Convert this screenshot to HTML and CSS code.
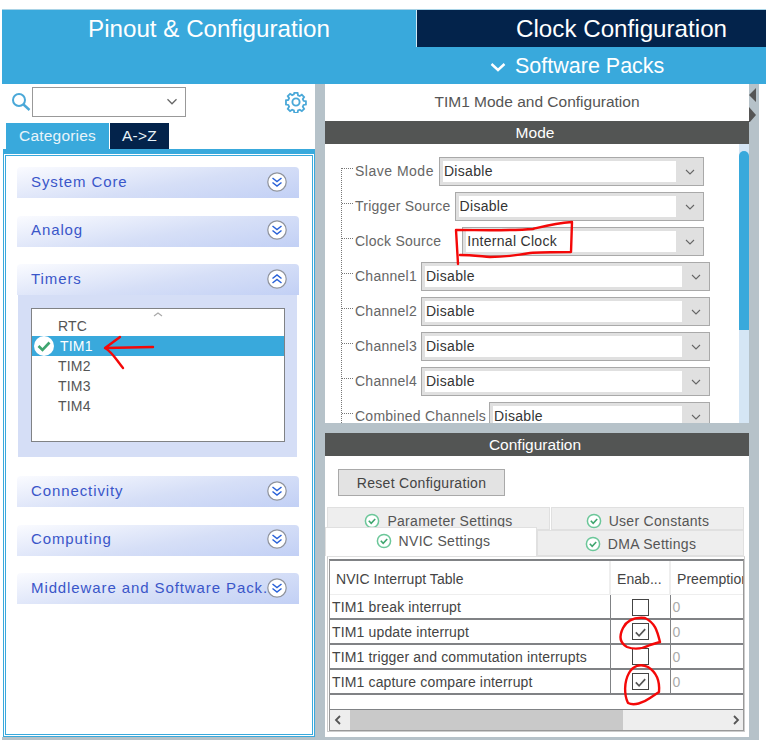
FILE: index.html
```html
<!DOCTYPE html>
<html lang="en">
<head>
  <meta charset="UTF-8">
  <title>TIM1 Mode and Configuration</title>
  <link rel="stylesheet" href="styles.css">
</head>
<body>
  <svg class="defs" width="0" height="0">
    <symbol id="chev" viewBox="0 0 12 8"><path d="M2 2l4 4 4-4" fill="none" stroke="#666" stroke-width="1.1"/></symbol>
    <symbol id="down2" viewBox="0 0 20 20"><circle cx="10" cy="10" r="9.2" fill="#fff" stroke="#8f939c" stroke-width="1.2"/><path d="M5.500 6l4.500 3.500L14.500 6M5.500 10.500l4.500 3.500 4.500-3.500" fill="none" stroke="#2a62d8" stroke-width="1.500"/></symbol>
    <symbol id="up2" viewBox="0 0 20 20"><circle cx="10" cy="10" r="9.2" fill="#fff" stroke="#8f939c" stroke-width="1.2"/><path d="M5.500 9.500L10 6l4.500 3.500M5.500 14L10 10.500l4.500 3.500" fill="none" stroke="#2a62d8" stroke-width="1.500"/></symbol>
    <symbol id="ok" viewBox="0 0 16 16"><circle cx="8" cy="8" r="6.600" fill="#fff" stroke="#6cc79a" stroke-width="1.500"/><path d="M4.800 7.800l2.400 2.600 4-4.400" fill="none" stroke="#3fa56f" stroke-width="1.600"/></symbol>
    <symbol id="tick" viewBox="0 0 16 16"><path d="M3 8.500l3.500 3.500L13 5" fill="none" stroke="#555" stroke-width="1.800"/></symbol>
  </svg>

  <div class="app">
    <div class="top-tabs">
      <div class="top-tab active">Pinout &amp; Configuration</div>
      <div class="top-tab dark">Clock Configuration</div>
    </div>
    <div class="packs-bar">
      <div class="packs-left"></div>
      <div class="packs-label">
        <svg width="16" height="10" viewBox="0 0 16 10"><path d="M1.500 2l6.500 6 6.500-6" fill="none" stroke="#fff" stroke-width="2.400"/></svg>
        Software Packs
      </div>
    </div>

    <div class="main">
      <div class="left">
        <div class="search-row">
          <svg class="search-icon" width="20" height="20" viewBox="0 0 20 20"><circle cx="8" cy="8" r="6" fill="none" stroke="#4aa8d8" stroke-width="2"/><path d="M12.500 12.500L18.500 18" stroke="#4aa8d8" stroke-width="2.400"/></svg>
          <div class="search-box"><svg width="14" height="9"><use href="#chev"/></svg></div>
          <svg class="gear" width="22" height="22" viewBox="0 0 22 22"><path d="M9.300 1.500h3.400l.5 2.500 1.800.8 2.200-1.400 2.400 2.400-1.400 2.200.8 1.800 2.500.5v3.400l-2.500.5-.8 1.800 1.400 2.200-2.400 2.400-2.200-1.400-1.800.8-.5 2.500H9.300l-.5-2.500-1.800-.8-2.200 1.400-2.400-2.400 1.400-2.200-.8-1.800-2.500-.5V9.300l2.500-.5.800-1.800-1.400-2.200 2.400-2.400 2.200 1.400 1.800-.8z" transform="translate(0.500 0.500) scale(0.950)" fill="none" stroke="#4aa8d8" stroke-width="1.900"/><circle cx="11" cy="11" r="3.600" fill="none" stroke="#4aa8d8" stroke-width="1.900"/></svg>
        </div>
        <div class="cat-tabs">
          <div class="cat-tab on">Categories</div>
          <div class="cat-tab off">A-&gt;Z</div>
        </div>
        <div class="cat-panel">
          <div class="acc-head"><span class="acc-title">System Core</span><svg class="acc-icon" width="20" height="20"><use href="#down2"/></svg></div>
          <div class="acc-head"><span class="acc-title">Analog</span><svg class="acc-icon" width="20" height="20"><use href="#down2"/></svg></div>
          <div class="acc-head open"><span class="acc-title">Timers</span><svg class="acc-icon" width="20" height="20"><use href="#up2"/></svg></div>
          <div class="acc-body">
            <div class="list-box">
              <div class="list-up"><svg width="12" height="6" viewBox="0 0 12 6"><path d="M2 5l4-3 4 3" fill="none" stroke="#aaa" stroke-width="1.200"/></svg></div>
              <div class="list-item">RTC</div>
              <div class="list-item selected"><svg class="list-ok" width="20" height="20" viewBox="0 0 20 20"><circle cx="10" cy="10" r="10" fill="#fff"/><path d="M4.500 10l4 4 7-7.500" fill="none" stroke="#3fa56f" stroke-width="2.600"/></svg>TIM1</div>
              <div class="list-item">TIM2</div>
              <div class="list-item">TIM3</div>
              <div class="list-item">TIM4</div>
            </div>
          </div>
          <div class="acc-head"><span class="acc-title">Connectivity</span><svg class="acc-icon" width="20" height="20"><use href="#down2"/></svg></div>
          <div class="acc-head"><span class="acc-title">Computing</span><svg class="acc-icon" width="20" height="20"><use href="#down2"/></svg></div>
          <div class="acc-head"><span class="acc-title">Middleware and Software Pack..</span><svg class="acc-icon" width="20" height="20"><use href="#down2"/></svg></div>
        </div>
      </div>

      <div class="splitter"></div>

      <div class="right">
        <div class="right-title">TIM1 Mode and Configuration</div>
        <div class="bar">Mode</div>
        <div class="mode-area">
          <div class="mode-rows">
            <div class="mode-row narrow"><span class="mode-label slave-label">Slave Mode</span><div class="combo"><div class="combo-val">Disable</div><svg width="12" height="8"><use href="#chev"/></svg></div></div>
            <div class="mode-row narrow"><span class="mode-label">Trigger Source</span><div class="combo"><div class="combo-val">Disable</div><svg width="12" height="8"><use href="#chev"/></svg></div></div>
            <div class="mode-row narrow"><span class="mode-label clock-label">Clock Source</span><div class="combo"><div class="combo-val">Internal Clock</div><svg width="12" height="8"><use href="#chev"/></svg></div></div>
            <div class="mode-row"><span class="mode-label">Channel1</span><div class="combo"><div class="combo-val">Disable</div><svg width="12" height="8"><use href="#chev"/></svg></div></div>
            <div class="mode-row"><span class="mode-label">Channel2</span><div class="combo"><div class="combo-val">Disable</div><svg width="12" height="8"><use href="#chev"/></svg></div></div>
            <div class="mode-row"><span class="mode-label">Channel3</span><div class="combo"><div class="combo-val">Disable</div><svg width="12" height="8"><use href="#chev"/></svg></div></div>
            <div class="mode-row"><span class="mode-label">Channel4</span><div class="combo"><div class="combo-val">Disable</div><svg width="12" height="8"><use href="#chev"/></svg></div></div>
            <div class="mode-row"><span class="mode-label combined-label">Combined Channels</span><div class="combo"><div class="combo-val">Disable</div><svg width="12" height="8"><use href="#chev"/></svg></div></div>
          </div>
          <div class="mode-scroll"><div class="mode-thumb"></div></div>
        </div>
        <div class="h-split"></div>
        <div class="bar">Configuration</div>
        <div class="config">
          <div class="reset-btn">Reset Configuration</div>
          <div class="cfg-tabs">
            <div class="tab-row back">
              <div class="cfg-tab param"><svg width="16" height="16"><use href="#ok"/></svg>Parameter Settings</div>
              <div class="cfg-tab user"><svg width="16" height="16"><use href="#ok"/></svg>User Constants</div>
            </div>
            <div class="tab-row front">
              <div class="cfg-tab nvic"><svg width="16" height="16"><use href="#ok"/></svg>NVIC Settings</div>
              <div class="cfg-tab dma"><svg width="16" height="16"><use href="#ok"/></svg>DMA Settings</div>
            </div>
          </div>
          <div class="tab-body">
            <div class="table-wrap">
              <table class="nvic-table">
                <colgroup><col class="c1"><col class="c2"><col class="c3"></colgroup>
                <tr class="head"><th>NVIC Interrupt Table</th><th>Enab...</th><th>Preemption Priority</th></tr>
                <tr class="first"><td>TIM1 break interrupt</td><td class="chk"><span class="box"></span></td><td class="num">0</td></tr>
                <tr><td>TIM1 update interrupt</td><td class="chk"><span class="box"><svg width="16" height="16"><use href="#tick"/></svg></span></td><td class="num">0</td></tr>
                <tr><td>TIM1 trigger and commutation interrupts</td><td class="chk"><span class="box"></span></td><td class="num">0</td></tr>
                <tr><td>TIM1 capture compare interrupt</td><td class="chk"><span class="box"><svg width="16" height="16"><use href="#tick"/></svg></span></td><td class="num">0</td></tr>
                <tr class="blank"><td colspan="3"></td></tr>
              </table>
              <div class="h-scroll">
                <svg width="10" height="12" viewBox="0 0 10 12"><path d="M7 2L3 6l4 4" fill="none" stroke="#555" stroke-width="1.800"/></svg>
                <div class="h-track"><div class="h-thumb"></div></div>
                <svg width="10" height="12" viewBox="0 0 10 12"><path d="M3 2l4 4-4 4" fill="none" stroke="#555" stroke-width="1.800"/></svg>
              </div>
            </div>
          </div>
        </div>
      </div>

      <div class="gutter">
        <svg width="8" height="36" viewBox="0 0 8 36"><path d="M7 2v14L0 9zM0 21l7 8-7 8z" fill="#555"/></svg>
      </div>
    </div>
    <div class="foot"></div>
  </div>

  <!-- red pen marks drawn over the screenshot -->
  <svg class="marks" width="766" height="745" viewBox="0 0 766 745">
    <g fill="none" stroke="#f40808" stroke-width="2.400" stroke-linecap="round" stroke-linejoin="round">
      <path d="M458 264L456 230C480 230 510 231 533 229C545 226 555 223 572 222L571 252C555 252 540 252 530 253C515 255 510 257 490 257C478 256 470 255 460 255"/>
      <path d="M153 347L105 348L120 337M105 348C112 352 115 358 123 368"/>
      <path d="M660 642C657 630 655 623 645 618C635 617 627 620 623 628C619 636 620 643 627 647C635 650 642 649 650 645L660 642"/>
      <path d="M659 692C660 680 656 672 648 667C640 663 633 666 629 673C624 682 624 695 628 703C634 706 643 703 650 698L659 692"/>
    </g>
  </svg>
</body>
</html>
```
FILE: styles.css
```css
* {
  box-sizing: border-box;
}

body {
  margin: 0;
  background: #fff;
  font-family: "Liberation Sans", Arial, sans-serif;
  color: #444;
  position: relative;
  width: 766px;
  height: 745px;
  overflow: hidden;
}

.defs {
  position: absolute;
}

.app {
  margin: 9px 0 0 2px;
  width: 764px;
  border-top: 1px solid #a9d3e6;
}

/* header */
.top-tabs {
  display: flex;
  height: 37px;
}

.top-tab {
  font-size: 24.200px;
  color: #fff;
  line-height: 37px;
}

.top-tab.active {
  width: 415px;
  background: #39a9dc;
  padding-left: 86px;
  border-right: 1px solid #cfe8f4;
}

.top-tab.dark {
  width: 349px;
  background: #03234b;
  padding-left: 99px;
}

.packs-bar {
  height: 37px;
  background: #39a9dc;
  display: flex;
}

.packs-left {
  width: 488px;
}

.packs-label {
  display: flex;
  align-items: center;
  gap: 9px;
  color: #fff;
  font-size: 21.500px;
  padding-top: 2px;
}

.main {
  display: flex;
  height: 653px;
}

/* left side */
.left {
  width: 313px;
}

.search-row {
  display: flex;
  align-items: center;
  height: 39px;
  padding: 0 0 4px 9px;
}

.search-box {
  width: 154px;
  height: 30px;
  border: 1px solid #999;
  margin-left: 1px;
  display: flex;
  align-items: center;
  justify-content: flex-end;
  padding-right: 6px;
}

.gear {
  margin-left: 99px;
}

.cat-tabs {
  display: flex;
  gap: 1px;
  padding-left: 4px;
  height: 26px;
}

.cat-tab {
  font-size: 15.500px;
  color: #e8f4fa;
  line-height: 26px;
  text-align: center;
  letter-spacing: 0.2px;
}

.cat-tab.on {
  width: 103px;
  background: #39a9dc;
}

.cat-tab.off {
  width: 59px;
  background: #03234b;
}

.cat-panel {
  margin-left: 1px;
  height: 588px;
  border: 1px solid #39a9dc;
  border-top-width: 5px;
  box-shadow: inset 0 0 0 1px #fff, inset 0 0 0 2px #39a9dc;
  padding: 13px 15px 0 13px;
}

.acc-head {
  height: 31px;
  border-radius: 4px 4px 0 0;
  background: linear-gradient(170deg, #fafbff 0%, #d6dff7 55%, #c2d0f5 100%);
  display: flex;
  align-items: center;
  padding: 0 12px 3px 14px;
  margin-bottom: 17.500px;
}

.acc-head.open {
  margin-bottom: 0;
}

.acc-title {
  flex: 1;
  min-width: 0;
  font-size: 15px;
  color: #3a56c9;
  letter-spacing: 0.9px;
  white-space: nowrap;
}

.acc-icon {
  flex: none;
  margin-top: 1px;
  position: relative;
}

.acc-body {
  margin: 0 2px 19px 1px;
  height: 162px;
  background: #d5def6;
  padding: 13px 12px 0 13px;
}

.list-box {
  height: 134px;
  background: #fff;
  border: 1px solid #808285;
}

.list-up {
  height: 7px;
  text-align: center;
  line-height: 6px;
}

.list-item {
  height: 20px;
  line-height: 20px;
  font-size: 14px;
  padding-left: 26px;
  position: relative;
  letter-spacing: 0.2px;
  color: #555;
}

.list-item.selected {
  background: #39a9dc;
  color: #fff;
  padding-left: 28px;
}

.list-ok {
  position: absolute;
  left: 2px;
  top: 0;
}

.splitter {
  width: 10px;
  background: #b6c2c9;
}

/* right side */
.right {
  width: 424px;
}

.right-title {
  height: 37px;
  line-height: 36px;
  text-align: center;
  font-size: 15.500px;
  color: #555;
}

.bar {
  height: 23px;
  background: #535554;
  color: #fff;
  text-align: center;
  font-size: 15.500px;
  line-height: 23px;
  padding-right: 4px;
}

.mode-area {
  display: flex;
  height: 279px;
  overflow: hidden;
}

.mode-rows {
  width: 414px;
  padding: 13px 0 0 16px;
  position: relative;
}

.mode-rows::before {
  content: "";
  position: absolute;
  left: 16px;
  top: 24px;
  bottom: -30px;
  border-left: 1px dotted #777;
}

.mode-row {
  display: flex;
  align-items: center;
  height: 29px;
  margin-bottom: 6px;
  padding-left: 14px;
  padding-right: 29px;
  position: relative;
}

.mode-row::before {
  content: "";
  position: absolute;
  left: 1px;
  top: 11px;
  width: 11px;
  border-top: 1px dotted #777;
}

.mode-row.narrow {
  padding-right: 35px;
}

.mode-label {
  font-size: 14px;
  letter-spacing: 0.25px;
  color: #666;
  white-space: nowrap;
  margin-right: 4px;
  padding-bottom: 2px;
}

.slave-label {
  letter-spacing: 0.5px;
  margin-right: 5px;
}

.clock-label {
  margin-right: 21px;
}

.combined-label {
  margin-right: 3px;
}

.combo {
  flex: 1;
  height: 29px;
  background: #e0e0e0;
  border: 1px solid #a9a9a9;
  padding: 3px;
  display: flex;
  align-items: center;
}

.combo-val {
  flex: 1;
  height: 21px;
  background: #fff;
  color: #333;
  font-size: 14px;
  letter-spacing: 0.3px;
  line-height: 21px;
  padding-left: 1px;
}

.combo svg {
  margin: 0 4px 0 8px;
}

.mode-scroll {
  width: 10px;
  background: #d5e6f5;
  padding-top: 7px;
}

.mode-thumb {
  height: 179px;
  background: #39a9dc;
  border-radius: 5px 5px 0 0;
}

.h-split {
  height: 10px;
  background: #b6c2c9;
}

.config {
  height: 280px;
  padding-top: 13px;
}

.reset-btn {
  margin-left: 13px;
  width: 167px;
  height: 27px;
  background: #e3e3e3;
  border: 1px solid #a9a9a9;
  font-size: 14px;
  letter-spacing: 0.3px;
  line-height: 26px;
  text-align: center;
  color: #444;
}

.cfg-tabs {
  margin-top: 11px;
  height: 49px;
}

.tab-row {
  display: flex;
}

.tab-row.back {
  height: 23px;
  padding-left: 2px;
  gap: 1px;
}

.cfg-tab {
  display: flex;
  align-items: center;
  justify-content: center;
  gap: 7px;
  font-size: 14px;
  letter-spacing: 0.3px;
  color: #555;
  background: #eee;
  border: 1px solid #e0e0e0;
}

.tab-row.back .cfg-tab {
  padding-top: 5px;
  overflow: hidden;
}

.cfg-tab.param {
  width: 223px;
}

.cfg-tab.user {
  width: 193px;
}

.tab-row.front {
  height: 29px;
  margin-top: -3px;
  align-items: flex-end;
  position: relative;
}

.cfg-tab.nvic {
  width: 212px;
  height: 29px;
  background: #fff;
  border-bottom: 0;
  padding-bottom: 3px;
  padding-left: 4px;
}

.cfg-tab.dma {
  width: 207px;
  height: 26px;
  padding-top: 1px;
}

.tab-body {
  margin: 0 4px 0 2px;
  height: 176px;
  border: 1px solid #ccc;
  border-top: 1px solid #e0e0e0;
  padding: 2px 0 0 1px;
}

.table-wrap {
  border: 1px solid #999;
  border-top: 2px solid #808285;
  overflow: hidden;
}

.nvic-table {
  table-layout: fixed;
  border-collapse: collapse;
  width: 416px;
  font-size: 14px;
  letter-spacing: 0.15px;
  color: #444;
}

.c1 {
  width: 280px;
}

.c2 {
  width: 60px;
}

.c3 {
  width: 76px;
}

.nvic-table th {
  height: 33px;
  font-weight: normal;
  text-align: left;
  padding: 3px 0 0 6px;
  white-space: nowrap;
  overflow: hidden;
  letter-spacing: 0.05px;
  border-right: 2px solid #eee;
  border-bottom: 1px solid #eee;
}

.nvic-table td {
  height: 25px;
  padding: 0 0 0 2px;
  white-space: nowrap;
  overflow: hidden;
  border-bottom: 2px solid #808285;
  border-right: 1px solid #808285;
}

.nvic-table td.chk {
  text-align: center;
  padding: 0;
}

.nvic-table tr.first td {
  padding-top: 2px;
}

.nvic-table td.num {
  color: #aaa;
  border-right: 0;
}

.nvic-table tr.blank td {
  height: 15px;
  border-right: 0;
  border-bottom: 1px solid #808285;
}

.box {
  display: inline-flex;
  width: 17px;
  height: 17px;
  border: 1px solid #444;
  vertical-align: middle;
}

.h-scroll {
  display: flex;
  align-items: center;
  height: 20px;
  background: #eee;
  padding: 0 2px 0 3px;
  gap: 2px;
}

.h-track {
  flex: 1;
  height: 20px;
  padding-left: 5px;
}

.h-thumb {
  width: 273px;
  height: 20px;
  background: #c9c9c9;
}

.gutter {
  width: 10px;
  background: #b6c2c9;
  padding-top: 2px;
  line-height: 0;
}

.foot {
  width: 757px;
  height: 3px;
  background: #b6c2c9;
}

.marks {
  position: absolute;
  left: 0;
  top: 0;
  pointer-events: none;
}
```
